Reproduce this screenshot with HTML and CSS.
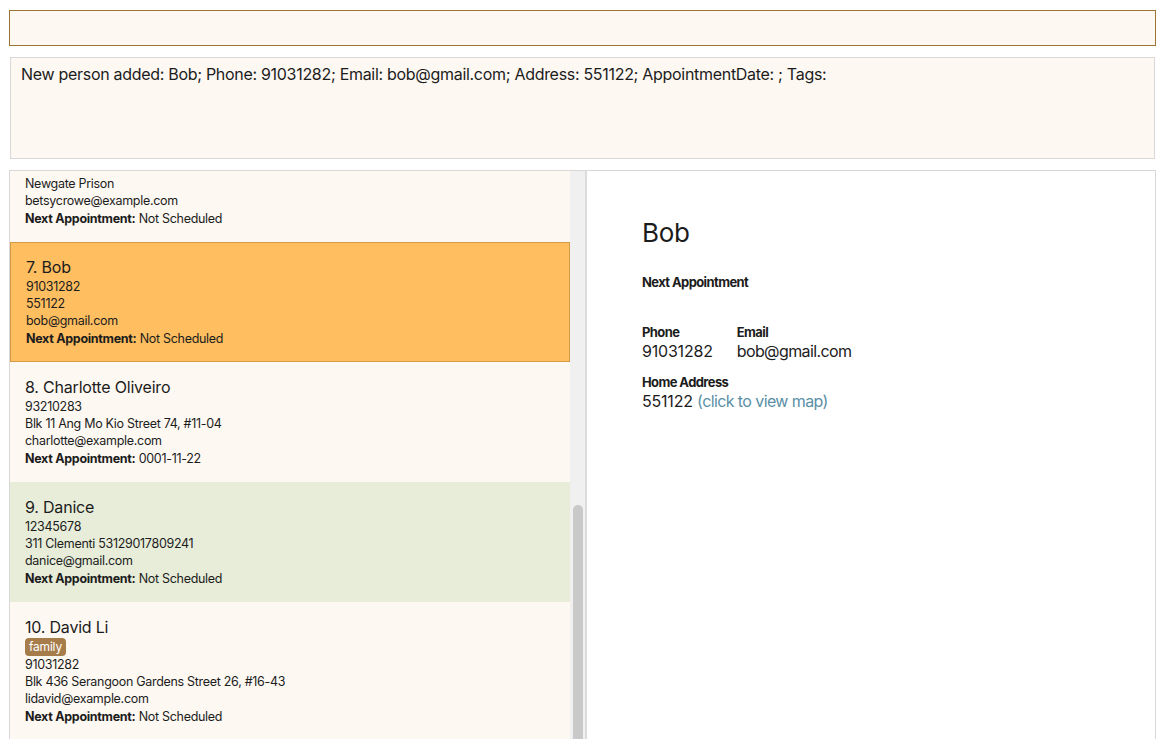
FILE: index.html
```html
<!DOCTYPE html>
<html>
<head>
<meta charset="utf-8">
<link rel="stylesheet" href="styles.css">
</head>
<body>
<div class="app">
  <div class="command-box"></div>
  <div class="result-box">New person added: Bob; Phone: 91031282; Email: bob@gmail.com; Address: 551122; AppointmentDate: ; Tags:</div>
  <div class="main">
    <div class="list-viewport">
      <div class="list">
        <div class="card partial">
          <div class="line">Newgate Prison</div>
          <div class="line">betsycrowe@example.com</div>
          <div class="line appt"><b>Next Appointment:</b> Not Scheduled</div>
        </div>
        <div class="card selected">
          <div class="name">7. Bob</div>
          <div class="line">91031282</div>
          <div class="line">551122</div>
          <div class="line">bob@gmail.com</div>
          <div class="line appt"><b>Next Appointment:</b> Not Scheduled</div>
        </div>
        <div class="card">
          <div class="name">8. Charlotte Oliveiro</div>
          <div class="line">93210283</div>
          <div class="line">Blk 11 Ang Mo Kio Street 74, #11-04</div>
          <div class="line">charlotte@example.com</div>
          <div class="line appt"><b>Next Appointment:</b> 0001-11-22</div>
        </div>
        <div class="card green">
          <div class="name">9. Danice</div>
          <div class="line">12345678</div>
          <div class="line">311 Clementi 53129017809241</div>
          <div class="line">danice@gmail.com</div>
          <div class="line appt"><b>Next Appointment:</b> Not Scheduled</div>
        </div>
        <div class="card">
          <div class="name">10. David Li</div>
          <div class="tags"><span class="tag">family</span></div>
          <div class="line">91031282</div>
          <div class="line">Blk 436 Serangoon Gardens Street 26, #16-43</div>
          <div class="line">lidavid@example.com</div>
          <div class="line appt"><b>Next Appointment:</b> Not Scheduled</div>
        </div>
      </div>
    </div>
    <div class="scrollbar"><div class="thumb"></div></div>
    <div class="divider"></div>
    <div class="detail">
      <div class="d-name">Bob</div>
      <div class="d-label">Next Appointment</div>
      <div class="d-value empty"></div>
      <div class="d-row">
        <div class="d-field">
          <div class="d-label">Phone</div>
          <div class="d-value">91031282</div>
        </div>
        <div class="d-field">
          <div class="d-label">Email</div>
          <div class="d-value tight">bob@gmail.com</div>
        </div>
      </div>
      <div class="d-field addr">
        <div class="d-label">Home Address</div>
        <div class="d-value">551122 <span class="link">(click to view map)</span></div>
      </div>
    </div>
  </div>
</div>
</body>
</html>
```
FILE: styles.css
```css
html, body {
  margin: 0;
  padding: 0;
  height: 100%;
  overflow: hidden;
  background: #ffffff;
  font-family: Inter, "Liberation Sans", sans-serif;
  color: #1c1c1c;
}

.app {
  padding: 10px 10px 0 9px;
  display: flex;
  flex-direction: column;
}

.command-box {
  height: 34px;
  border: 1px solid #9b7433;
  background: #fdf8f2;
}

.result-box {
  margin: 11px 1px 0 1px;
  border: 1px solid #d8d8d8;
  background: #fdf8f2;
  padding: 1px 10px 0 10px;
  height: 99px;
  font-size: 16px;
  line-height: 30px;
  letter-spacing: -0.3px;
}

.main {
  margin-top: 11px;
  height: 568px;
  border: 1px solid #d8d8d8;
  border-bottom: none;
  display: flex;
}

.list-viewport {
  width: 560px;
  overflow: hidden;
  background: #fdf8f2;
}

.list {
  display: flex;
  flex-direction: column;
}

.card {
  padding: 15px 15px 14px 15px;
  background: #fdf8f2;
}

.card.partial {
  padding-top: 4px;
}

.card.selected {
  background: #ffbe60;
  border: 1px solid #d49a48;
  padding: 14px 14px 13px 15px;
}

.card.green {
  background: #e7edd9;
}

.name {
  font-size: 16px;
  line-height: 21px;
  letter-spacing: -0.2px;
}

.line {
  font-size: 12.5px;
  line-height: 17px;
  letter-spacing: -0.3px;
}

.line.appt {
  line-height: 18px;
  margin-top: 1px;
}

.line b {
  font-weight: 700;
}

.tags {
  display: flex;
}

.tag {
  background: #a67c4b;
  color: #ffffff;
  font-size: 12px;
  line-height: 18px;
  padding: 0 4px;
  border-radius: 4px;
  letter-spacing: -0.2px;
}

.scrollbar {
  width: 15px;
  background: #f0f0f0;
  display: flex;
  flex-direction: column;
  padding-top: 334px;
  box-sizing: border-box;
}

.thumb {
  margin-left: 3px;
  width: 10px;
  flex: 1;
  background: #c9c9c9;
  border-radius: 5px 5px 0 0;
}

.divider {
  width: 2px;
  background: #dcdcdc;
}

.detail {
  flex: 1;
  background: #ffffff;
  padding: 46px 0 0 55px;
}

.d-name {
  font-size: 26px;
  line-height: 32px;
  letter-spacing: -0.3px;
}

.d-name + .d-label {
  margin-top: 25px;
}

.d-label {
  font-size: 13px;
  font-weight: 700;
  line-height: 17px;
  letter-spacing: -0.6px;
}

.d-value {
  font-size: 16px;
  line-height: 20px;
  letter-spacing: -0.2px;
}

.d-value.tight,
.link {
  letter-spacing: -0.6px;
}

.d-value.empty {
  height: 19px;
}

.d-row {
  margin-top: 14px;
  display: flex;
  gap: 24px;
}

.addr {
  margin-top: 13px;
}

.link {
  color: #5a8fa6;
}
```
